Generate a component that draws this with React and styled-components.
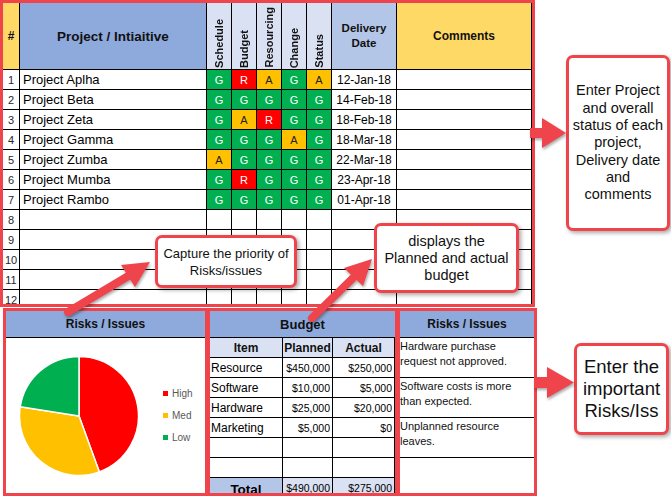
import React from 'react'
import styled, { createGlobalStyle } from 'styled-components'

const RED = '#ef444b'

const GlobalStyle = createGlobalStyle`
  html, body {
    margin: 0;
    padding: 0;
    background: #fff;
  }
  body {
    font-family: "Liberation Sans", Arial, sans-serif;
    color: #000;
  }
`

const Page = styled.div`
  position: relative;
  width: 671px;
  height: 496px;
  overflow: hidden;
  display: flex;
  background: #fff;
`

const Sheet = styled.div`
  width: 537px;
  flex: none;
  display: flex;
  flex-direction: column;
`

// top tracker table
const TrackerFrame = styled.div`
  width: 535px;
  height: 307px;
  box-sizing: border-box;
  border: 3px solid ${RED};
  overflow: hidden;
`

const TrackerGrid = styled.div`
  display: grid;
  grid-template-columns: 17px 187px repeat(5, 25px) 65px 135px;
  grid-template-rows: 67px repeat(12, 20px);
`

const Cell = styled.div`
  box-sizing: border-box;
  border-right: 1px solid #000;
  border-bottom: 1px solid #000;
  display: flex;
  align-items: center;
  justify-content: center;
  background: ${p => p.$bg || '#fff'};
  overflow: hidden;
  white-space: nowrap;
`

const HeadCell = styled(Cell)`
  font-weight: bold;
  font-size: ${p => p.$size || 12}px;
  line-height: 15px;
  text-align: center;
  white-space: normal;
  color: #111;
`

const TurnedHead = styled(Cell)`
  align-items: flex-end;
  padding-bottom: 1px;
  background: #d9e1f2;
`

const TurnedText = styled.span`
  writing-mode: vertical-rl;
  transform: rotate(180deg);
  font-size: 11px;
  font-weight: bold;
  color: #111;
`

const RowNum = styled(Cell)`
  font-size: 11px;
  color: #1f1f2f;
`

const NameCell = styled(Cell)`
  justify-content: flex-start;
  padding-left: 3px;
  font-size: 13px;
`

const ragColors = {
  G: ['#00b050', '#fff'],
  R: ['#ff0000', '#fff'],
  A: ['#ffc000', '#222'],
}

const RagCell = styled(Cell)`
  font-size: 11px;
  background: ${p => ragColors[p.$rag][0]};
  color: ${p => ragColors[p.$rag][1]};
`

const DateCell = styled(Cell)`
  font-size: 12px;
`

// bottom panels
const BottomRow = styled.div`
  display: flex;
  padding-left: 3px;
  margin-top: 1px;
`

const Panel = styled.div`
  box-sizing: border-box;
  flex: none;
  width: ${p => p.$w}px;
  height: 188px;
  margin-left: ${p => (p.$overlap ? -1 : 0)}px;
  border: 3px solid ${RED};
  overflow: hidden;
  display: flex;
  flex-direction: column;
`

const PanelTitle = styled.div`
  box-sizing: border-box;
  height: 27px;
  flex: none;
  background: #8ea9db;
  border-bottom: 1px solid #000;
  display: flex;
  align-items: center;
  justify-content: center;
  font-weight: bold;
  font-size: ${p => p.$size || 12}px;
  color: #111;
`

const PieBody = styled.div`
  flex: 1;
  display: flex;
  align-items: center;
  padding-left: 13px;
`

const Legend = styled.div`
  margin-left: 24px;
  display: flex;
  flex-direction: column;
  gap: 10px;
`

const LegendItem = styled.div`
  display: flex;
  align-items: center;
  gap: 4px;
  font-size: 10px;
  line-height: 12px;
  color: #595959;
`

const Swatch = styled.span`
  width: 5px;
  height: 5px;
  background: ${p => p.$color};
`

const BudgetGrid = styled.div`
  display: grid;
  grid-template-columns: 73px 50px 62px;
  grid-auto-rows: 20px;
`

const SubHead = styled(Cell)`
  background: #d9e1f2;
  font-weight: bold;
  font-size: 12px;
  color: #111;
`

const ItemCell = styled(Cell)`
  justify-content: flex-start;
  padding-left: 1px;
  font-size: 12px;
`

const MoneyCell = styled(Cell)`
  justify-content: flex-end;
  padding-right: 2px;
  font-size: 10.5px;
  background: ${p => p.$bg || '#fff'};
`

const TotalLabel = styled(Cell)`
  background: #b4c6e7;
  font-weight: bold;
  font-size: 13.5px;
  align-items: flex-end;
  padding-bottom: 0;
`

const RiskRow = styled.div`
  box-sizing: border-box;
  height: 40px;
  flex: none;
  border-bottom: 1px solid #000;
  padding: 1px 1px 0 0;
  font-size: 11px;
  line-height: 15px;
  color: #111;
`

// annotations
const Notes = styled.div`
  flex: 1;
  display: flex;
  flex-direction: column;
  padding-top: 55px;
`

const Note = styled.div`
  display: flex;
  align-items: flex-start;
  margin-top: ${p => p.$gap || 0}px;
`

const NoteArrow = styled.svg`
  flex: none;
  position: relative;
  z-index: 1;
  margin-left: ${p => p.$pull}px;
  margin-top: ${p => p.$drop}px;
  overflow: visible;
  filter: drop-shadow(1px 2px 1.5px rgba(0, 0, 0, 0.35));
`

const Callout = styled.div`
  box-sizing: border-box;
  flex: none;
  width: ${p => p.$w}px;
  height: ${p => p.$h}px;
  border: 3px solid ${RED};
  border-radius: 7px;
  background: #fff;
  box-shadow: 2px 2px 4px rgba(0, 0, 0, 0.35);
  display: flex;
  align-items: center;
  justify-content: center;
  text-align: center;
  font-size: ${p => p.$size}px;
  line-height: ${p => p.$lh}px;
  color: #111;
`

const FloatingCallout = styled(Callout)`
  position: absolute;
  left: ${p => p.$x}px;
  top: ${p => p.$y}px;
  z-index: 3;
`

const ArrowLayer = styled.svg`
  position: absolute;
  left: 0;
  top: 0;
  z-index: 2;
  pointer-events: none;
  filter: drop-shadow(1px 2px 1.5px rgba(0, 0, 0, 0.35));
`

const projects = [
  ['Project Aplha', 'GRAGA', '12-Jan-18'],
  ['Project Beta', 'GGGGG', '14-Feb-18'],
  ['Project Zeta', 'GARGG', '18-Feb-18'],
  ['Project Gamma', 'GGGAG', '18-Mar-18'],
  ['Project Zumba', 'AGGGG', '22-Mar-18'],
  ['Project Mumba', 'GRGGG', '23-Apr-18'],
  ['Project Rambo', 'GGGGG', '01-Apr-18'],
]

const budget = [
  ['Resource', '$450,000', '$250,000'],
  ['Software', '$10,000', '$5,000'],
  ['Hardware', '$25,000', '$20,000'],
  ['Marketing', '$5,000', '$0'],
  ['', '', ''],
  ['', '', ''],
]

const risks = [
  'Hardware purchase request not approved.',
  'Software costs is more than expected.',
  'Unplanned resource leaves.',
  '',
]

const slices = [
  { color: '#ff0000', from: 0, to: 160 },
  { color: '#ffc000', from: 160, to: 279 },
  { color: '#00b050', from: 279, to: 360 },
]

const point = (c, r, deg) => {
  const a = (deg * Math.PI) / 180
  return [c + r * Math.sin(a), c - r * Math.cos(a)]
}

const slicePath = (c, r, from, to) => {
  const [x0, y0] = point(c, r, from)
  const [x1, y1] = point(c, r, to - 0.001)
  const large = to - from > 180 ? 1 : 0
  return `M${c} ${c} L${x0} ${y0} A${r} ${r} 0 ${large} 1 ${x1} ${y1} Z`
}

const RiskPie = () => (
  <svg width="120" height="120" viewBox="0 0 120 120">
    {slices.map(s => (
      <path
        key={s.color}
        d={slicePath(60, 59.5, s.from, s.to)}
        fill={s.color}
        stroke="#fff"
        strokeWidth="1.5"
        strokeLinejoin="round"
      />
    ))}
  </svg>
)

const Tracker = () => {
  const rows = []
  for (let i = 0; i < 12; i++) {
    const p = projects[i]
    rows.push(
      <React.Fragment key={i}>
        <RowNum>{i + 1}</RowNum>
        <NameCell>{p ? p[0] : ''}</NameCell>
        {p
          ? p[1].split('').map((s, j) => (
              <RagCell key={j} $rag={s}>
                {s}
              </RagCell>
            ))
          : [0, 1, 2, 3, 4].map(j => <Cell key={j} />)}
        <DateCell>{p ? p[2] : ''}</DateCell>
        <Cell />
      </React.Fragment>
    )
  }

  return (
    <TrackerFrame>
      <TrackerGrid>
        <HeadCell $bg="#ffd966" $size={12}>#</HeadCell>
        <HeadCell $bg="#8ea9db" $size={13.5}>Project / Intiaitive</HeadCell>
        {['Schedule', 'Budget', 'Resourcing', 'Change', 'Status'].map(h => (
          <TurnedHead key={h}>
            <TurnedText>{h}</TurnedText>
          </TurnedHead>
        ))}
        <HeadCell $bg="#b4c6e7" $size={11.5}>
          Delivery
          <br />
          Date
        </HeadCell>
        <HeadCell $bg="#ffd966" $size={12}>Comments</HeadCell>
        {rows}
      </TrackerGrid>
    </TrackerFrame>
  )
}

const App = () => {
  return (
    <>
      <GlobalStyle />
      <Page>
        <Sheet>
          <Tracker />
          <BottomRow>
            <Panel $w={205}>
              <PanelTitle $size={12}>Risks / Issues</PanelTitle>
              <PieBody>
                <RiskPie />
                <Legend>
                  <LegendItem>
                    <Swatch $color="#ff0000" />
                    High
                  </LegendItem>
                  <LegendItem>
                    <Swatch $color="#ffc000" />
                    Med
                  </LegendItem>
                  <LegendItem>
                    <Swatch $color="#00b050" />
                    Low
                  </LegendItem>
                </Legend>
              </PieBody>
            </Panel>

            <Panel $w={191} $overlap>
              <PanelTitle $size={13}>Budget</PanelTitle>
              <BudgetGrid>
                <SubHead>Item</SubHead>
                <SubHead>Planned</SubHead>
                <SubHead>Actual</SubHead>
                {budget.map((b, i) => (
                  <React.Fragment key={i}>
                    <ItemCell>{b[0]}</ItemCell>
                    <MoneyCell>{b[1]}</MoneyCell>
                    <MoneyCell>{b[2]}</MoneyCell>
                  </React.Fragment>
                ))}
                <TotalLabel>Total</TotalLabel>
                <MoneyCell $bg="#d9e1f2">$490,000</MoneyCell>
                <MoneyCell $bg="#d9e1f2">$275,000</MoneyCell>
              </BudgetGrid>
            </Panel>

            <Panel $w={140} $overlap>
              <PanelTitle $size={12}>Risks / Issues</PanelTitle>
              {risks.map((r, i) => (
                <RiskRow key={i}>{r}</RiskRow>
              ))}
            </Panel>
          </BottomRow>
        </Sheet>

        <Notes>
          <Note>
            <NoteArrow width="36" height="30" $pull={-7} $drop={63}>
              <rect x="0" y="10" width="14" height="10" fill={RED} />
              <polygon points="12,0 36,15 12,30" fill={RED} />
            </NoteArrow>
            <Callout $w={104} $h={176} $size={14.5} $lh={17.3}>
              <div>
                Enter Project
                <br />
                and overall
                <br />
                status of each
                <br />
                project,
                <br />
                Delivery date
                <br />
                and
                <br />
                comments
              </div>
            </Callout>
          </Note>
          <Note $gap={112}>
            <NoteArrow width="40" height="31" $pull={-3} $drop={24}>
              <rect x="0" y="10" width="15" height="11" fill={RED} />
              <polygon points="13,0 40,15.5 13,31" fill={RED} />
            </NoteArrow>
            <Callout $w={95} $h={92} $size={18.5} $lh={22}>
              <div>
                Enter the
                <br />
                important
                <br />
                Risks/Iss
              </div>
            </Callout>
          </Note>
        </Notes>

        <ArrowLayer width="671" height="496">
          <line x1="68" y1="312" x2="130" y2="275" stroke={RED} strokeWidth="8" strokeLinecap="round" />
          <polygon points="150,262 121,265 135,287" fill={RED} />
          <line x1="312" y1="318" x2="355" y2="276" stroke={RED} strokeWidth="8" strokeLinecap="round" />
          <polygon points="372,259 344,268 363,286" fill={RED} />
        </ArrowLayer>

        <FloatingCallout $x={155} $y={235} $w={142} $h={53} $size={13} $lh={17}>
          <div>
            Capture the priority of
            <br />
            Risks/issues
          </div>
        </FloatingCallout>
        <FloatingCallout $x={374} $y={223} $w={145} $h={70} $size={14.5} $lh={17}>
          <div>
            displays the
            <br />
            Planned and actual
            <br />
            budget
          </div>
        </FloatingCallout>
      </Page>
    </>
  )
}

export default App
